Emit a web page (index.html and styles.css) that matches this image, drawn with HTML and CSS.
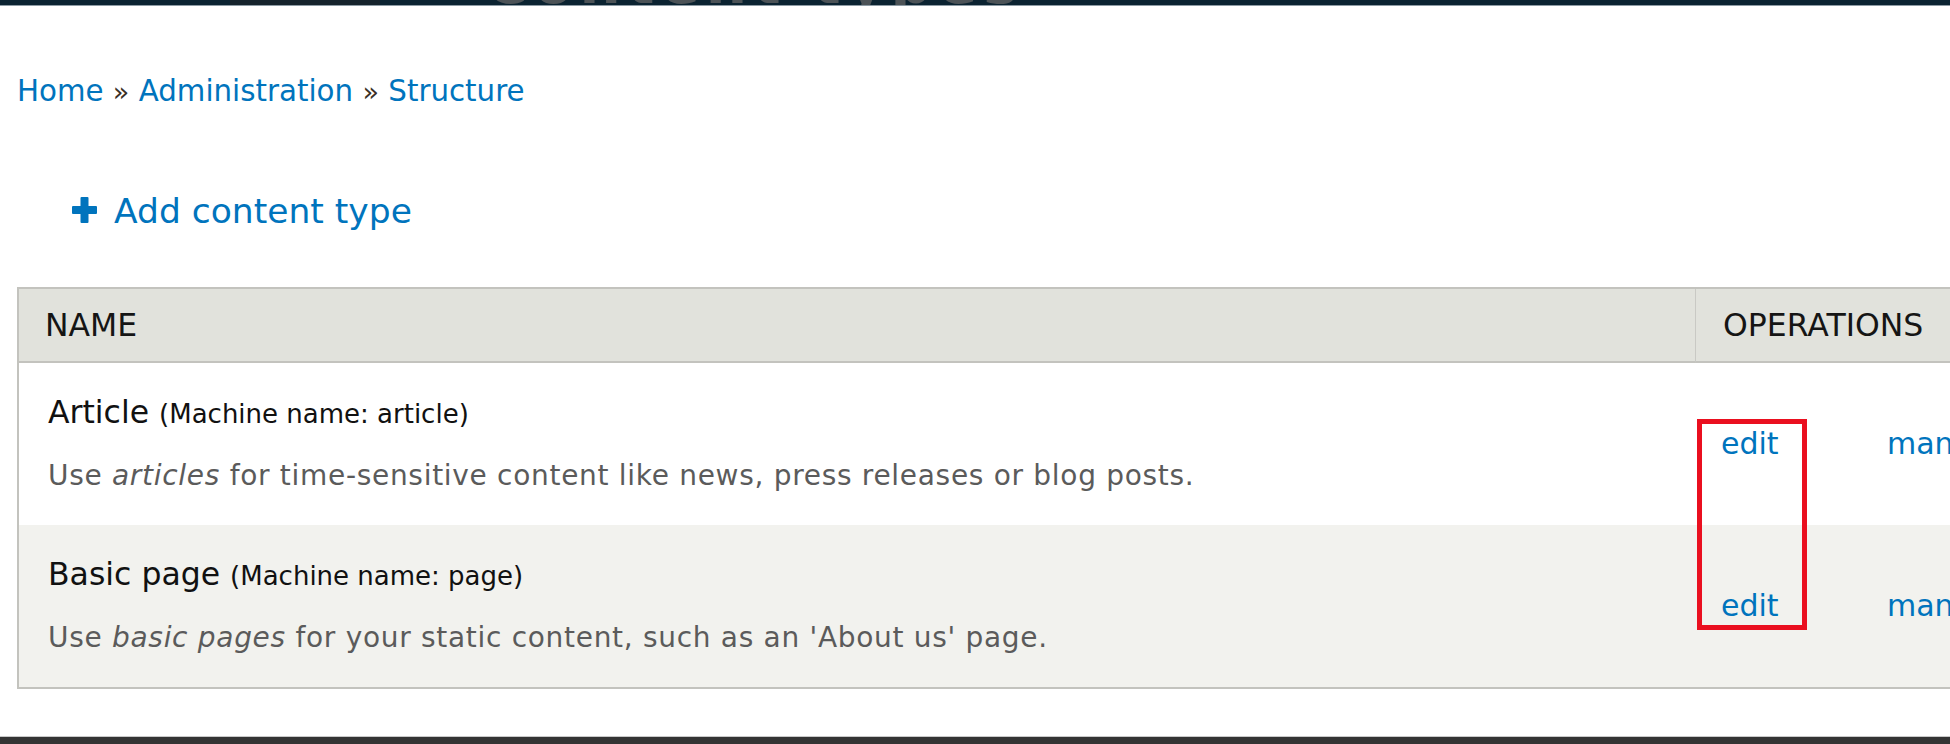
FILE: index.html
```html
<!DOCTYPE html>
<html lang="en">
<head>
<meta charset="utf-8">
<title>Content types</title>
<link rel="stylesheet" href="styles.css">
</head>
<body>
<header class="topbar">
  <span class="topbar-block"></span>
  <span class="topbar-title">Content types</span>
</header>
<main class="page">
  <nav class="breadcrumb">
    <a href="#">Home</a> <span class="sep">»</span> <a href="#">Administration</a> <span class="sep">»</span> <a href="#">Structure</a>
  </nav>
  <ul class="action-links">
    <li>
      <a href="#" class="action-add">
        <svg class="plus" width="25" height="26" viewBox="0 0 25 26" aria-hidden="true">
          <rect x="8.5" y="0" width="8" height="26" rx="1" fill="#0074bd"/>
          <rect x="0" y="9" width="25" height="8" rx="1" fill="#0074bd"/>
        </svg>
        <span>Add content type</span>
      </a>
    </li>
  </ul>
  <div class="table-wrap">
    <table class="types">
      <colgroup>
        <col class="col-name">
        <col class="col-edit">
        <col class="col-fields">
      </colgroup>
      <thead>
        <tr>
          <th class="th-name">NAME</th>
          <th class="th-ops" colspan="2">OPERATIONS</th>
        </tr>
      </thead>
      <tbody>
        <tr class="odd">
          <td class="name-cell">
            <div class="type-title">Article <small>(Machine name: article)</small></div>
            <div class="description">Use <em>articles</em> for time-sensitive content like news, press releases or blog posts.</div>
          </td>
          <td class="op"><a href="#">edit</a></td>
          <td class="op"><a href="#">manage fields</a></td>
        </tr>
        <tr class="even">
          <td class="name-cell">
            <div class="type-title">Basic page <small>(Machine name: page)</small></div>
            <div class="description">Use <em>basic pages</em> for your static content, such as an 'About us' page.</div>
          </td>
          <td class="op"><a href="#">edit</a></td>
          <td class="op"><a href="#">manage fields</a></td>
        </tr>
      </tbody>
    </table>
    <div class="highlight"></div>
  </div>
</main>
<footer class="bottombar"></footer>
</body>
</html>
```
FILE: styles.css
```css
html, body {
  margin: 0;
  padding: 0;
  overflow: hidden;
  background: #ffffff;
}

body {
  font-family: "DejaVu Sans", Verdana, sans-serif;
  color: #222222;
  width: 1950px;
  height: 744px;
}

a {
  color: #0074bd;
  text-decoration: none;
}

.topbar {
  height: 5px;
  background: #0b2331;
  border-bottom: 1px solid #8d9ba4;
  overflow: hidden;
  display: flex;
  align-items: flex-end;
}

.topbar-block {
  width: 150px;
  height: 5px;
  margin-left: 230px;
  background: #15232c;
}

.topbar-title {
  margin-left: 105px;
  font-size: 58px;
  font-weight: bold;
  line-height: 20px;
  height: 20px;
  color: #4c5357;
  letter-spacing: 6px;
  transform: translateY(-12px);
  white-space: nowrap;
}

.page {
  padding-left: 17px;
}

.breadcrumb {
  margin-top: 67px;
  font-size: 29.3px;
  line-height: 36px;
  height: 36px;
  white-space: nowrap;
}

.breadcrumb .sep {
  color: #3b3026;
  font-size: 27px;
}

.action-links {
  list-style: none;
  margin: 82px 0 0 0;
  padding: 0 0 0 55px;
}

.action-add {
  display: flex;
  align-items: center;
  gap: 17px;
  font-size: 34.5px;
  line-height: 40px;
  height: 40px;
}

.plus {
  display: block;
  margin-top: -3px;
}

.table-wrap {
  position: relative;
  margin-top: 56px;
  width: 2180px;
}

.types {
  border-collapse: separate;
  border-spacing: 0;
  table-layout: fixed;
  width: 2180px;
  border: 2px solid #c3c3be;
  border-right: none;
}

.col-name { width: 1676px; }
.col-edit { width: 166px; }
.col-fields { width: 336px; }

.types th {
  background: #e1e2dc;
  color: #151515;
  font-weight: normal;
  text-align: left;
  font-size: 31.5px;
  line-height: 40px;
  padding: 16px 0 16px 26px;
  border-bottom: 2px solid #c3c3be;
  white-space: nowrap;
}

.types th.th-ops {
  border-left: 1px solid #c9c9c4;
  padding-left: 27px;
}

.types tr.odd td {
  background: #ffffff;
}

.types tr.even td {
  background: #f2f2ee;
}

.name-cell {
  padding: 29px 0 32px 29px;
  vertical-align: top;
}

.type-title {
  font-size: 31.5px;
  line-height: 40px;
  color: #111111;
  white-space: nowrap;
}

.type-title small {
  font-size: 26px;
}

.description {
  margin-top: 25px;
  font-size: 28px;
  letter-spacing: 0.7px;
  line-height: 34px;
  color: #5b5b5b;
  white-space: nowrap;
}

.op {
  vertical-align: middle;
  font-size: 30px;
  line-height: 36px;
  padding-left: 26px;
  white-space: nowrap;
}

.highlight {
  position: absolute;
  left: 1680px;
  top: 132px;
  width: 100px;
  height: 201px;
  border: 5px solid #ea0f1f;
}

.bottombar {
  margin-top: 47px;
  height: 10px;
  border-top: 1px solid #c9c9c9;
  background: #343434;
}
```
